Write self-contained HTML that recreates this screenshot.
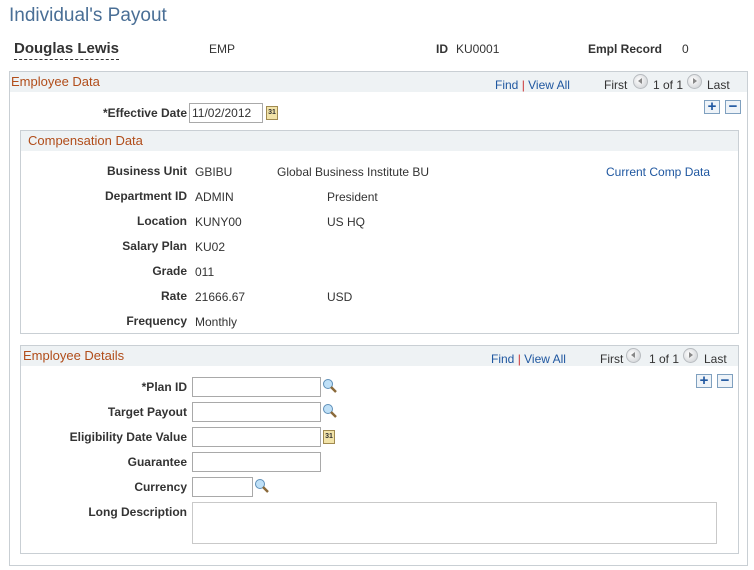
<!DOCTYPE html>
<html><head><style>
*{margin:0;padding:0;box-sizing:border-box}
body{width:754px;height:570px;background:#fff;font-family:"Liberation Sans",Arial,sans-serif;font-size:12px;color:#333;position:relative;overflow:hidden}
.a{position:absolute;white-space:nowrap}
.lb{position:absolute;font-weight:bold;text-align:right;width:190px;left:-3px;color:#333}
.v{position:absolute}
.box{position:absolute;border:1px solid #c9cfd4}
.hd{position:absolute;left:0;right:0;top:0;height:20px;background:#eef2f4}
.ht{position:absolute;color:#b14d1a;font-size:13px;top:2px}
.lnk{color:#1f57a0}
.inp{position:absolute;border:1px solid #a9a9a9;background:#fff;height:20px}
.cal{position:absolute;width:12px;height:14px;background:#f2e3a8;border:1px solid #a08a50;font-size:7px;font-weight:bold;text-align:center;line-height:12px;color:#333}
.nav{position:absolute;width:15px;height:15px;border-radius:50%;background:radial-gradient(circle at 40% 40%,#fff,#c9ccd0);border:1px solid #b8bcc0}
.nav.l::after{content:"";position:absolute;left:4px;top:3px;border-right:4px solid #888;border-top:3.5px solid transparent;border-bottom:3.5px solid transparent}
.nav.r::after{content:"";position:absolute;left:5px;top:3px;border-left:4px solid #888;border-top:3.5px solid transparent;border-bottom:3.5px solid transparent}
.pm{position:absolute;width:16px;height:14px;border:1px solid #7fa0bf;background:#eef3f8;color:#1f57a0;font-weight:bold;font-size:15px;line-height:11px;text-align:center}
</style></head><body>
<div class="a" style="left:9px;top:5px;font-size:19px;color:#4a6f96">Individual's Payout</div>
<div class="a" style="left:14px;top:40px;font-size:15px;font-weight:bold;color:#333;border-bottom:1px dashed #333;padding-bottom:2px">Douglas Lewis</div>
<div class="a" style="left:209px;top:42px">EMP</div>
<div class="a" style="left:436px;top:42px;font-weight:bold">ID</div>
<div class="a" style="left:456px;top:42px">KU0001</div>
<div class="a" style="left:588px;top:42px;font-weight:bold">Empl Record</div>
<div class="a" style="left:682px;top:42px">0</div>

<div class="box" style="left:9px;top:71px;width:739px;height:495px">
 <div class="hd"></div>
 <div class="ht" style="left:1px">Employee Data</div>
 <div class="a lnk" style="left:485px;top:6px">Find <span style="color:#c33">|</span> View All</div>
 <div class="a" style="left:594px;top:6px">First</div>
 <div class="nav l" style="left:623px;top:2px"></div>
 <div class="a" style="left:643px;top:6px">1 of 1</div>
 <div class="nav r" style="left:677px;top:2px"></div>
 <div class="a" style="left:697px;top:6px">Last</div>
 <div class="pm" style="left:694px;top:28px">+</div>
 <div class="pm" style="left:715px;top:28px">−</div>
</div>
<div class="lb" style="top:106px">*Effective Date</div>
<div class="inp" style="left:189px;top:103px;width:74px;padding:2px 2px;font-size:12px">11/02/2012</div>
<div class="cal" style="left:266px;top:106px">31</div>

<div class="box" style="left:20px;top:130px;width:719px;height:204px">
 <div class="hd"></div>
 <div class="ht" style="left:7px">Compensation Data</div>
</div>
<div class="lb" style="top:164px">Business Unit</div><div class="v" style="left:195px;top:165px">GBIBU</div><div class="v" style="left:277px;top:165px">Global Business Institute BU</div>
<div class="v lnk" style="left:606px;top:165px">Current Comp Data</div>
<div class="lb" style="top:189px">Department ID</div><div class="v" style="left:195px;top:190px">ADMIN</div><div class="v" style="left:327px;top:190px">President</div>
<div class="lb" style="top:214px">Location</div><div class="v" style="left:195px;top:215px">KUNY00</div><div class="v" style="left:327px;top:215px">US HQ</div>
<div class="lb" style="top:239px">Salary Plan</div><div class="v" style="left:195px;top:240px">KU02</div>
<div class="lb" style="top:264px">Grade</div><div class="v" style="left:195px;top:265px">011</div>
<div class="lb" style="top:289px">Rate</div><div class="v" style="left:195px;top:290px">21666.67</div><div class="v" style="left:327px;top:290px">USD</div>
<div class="lb" style="top:314px">Frequency</div><div class="v" style="left:195px;top:315px">Monthly</div>

<div class="box" style="left:20px;top:345px;width:719px;height:209px">
 <div class="hd"></div>
 <div class="ht" style="left:2px">Employee Details</div>
 <div class="a lnk" style="left:470px;top:6px">Find <span style="color:#c33">|</span> View All</div>
 <div class="a" style="left:579px;top:6px">First</div>
 <div class="nav l" style="left:605px;top:2px"></div>
 <div class="a" style="left:628px;top:6px">1 of 1</div>
 <div class="nav r" style="left:662px;top:2px"></div>
 <div class="a" style="left:683px;top:6px">Last</div>
 <div class="pm" style="left:675px;top:28px">+</div>
 <div class="pm" style="left:696px;top:28px">−</div>
</div>
<div class="lb" style="top:380px">*Plan ID</div><div class="inp" style="left:192px;top:377px;width:129px"></div>
<svg class="a" style="left:322px;top:378px" width="16" height="16"><circle cx="6" cy="6" r="4.5" fill="#bfe0f7" stroke="#5e8fb8"/><line x1="9" y1="9" x2="14" y2="14" stroke="#8a6a3a" stroke-width="2.5"/></svg>
<div class="lb" style="top:405px">Target Payout</div><div class="inp" style="left:192px;top:402px;width:129px"></div>
<svg class="a" style="left:322px;top:403px" width="16" height="16"><circle cx="6" cy="6" r="4.5" fill="#bfe0f7" stroke="#5e8fb8"/><line x1="9" y1="9" x2="14" y2="14" stroke="#8a6a3a" stroke-width="2.5"/></svg>
<div class="lb" style="top:430px">Eligibility Date Value</div><div class="inp" style="left:192px;top:427px;width:129px"></div>
<div class="cal" style="left:323px;top:430px">31</div>
<div class="lb" style="top:455px">Guarantee</div><div class="inp" style="left:192px;top:452px;width:129px"></div>
<div class="lb" style="top:480px">Currency</div><div class="inp" style="left:192px;top:477px;width:61px"></div>
<svg class="a" style="left:254px;top:478px" width="16" height="16"><circle cx="6" cy="6" r="4.5" fill="#bfe0f7" stroke="#5e8fb8"/><line x1="9" y1="9" x2="14" y2="14" stroke="#8a6a3a" stroke-width="2.5"/></svg>
<div class="lb" style="top:505px">Long Description</div><div class="inp" style="left:192px;top:502px;width:525px;height:42px;border-color:#c9c9c9"></div>
</body></html>
